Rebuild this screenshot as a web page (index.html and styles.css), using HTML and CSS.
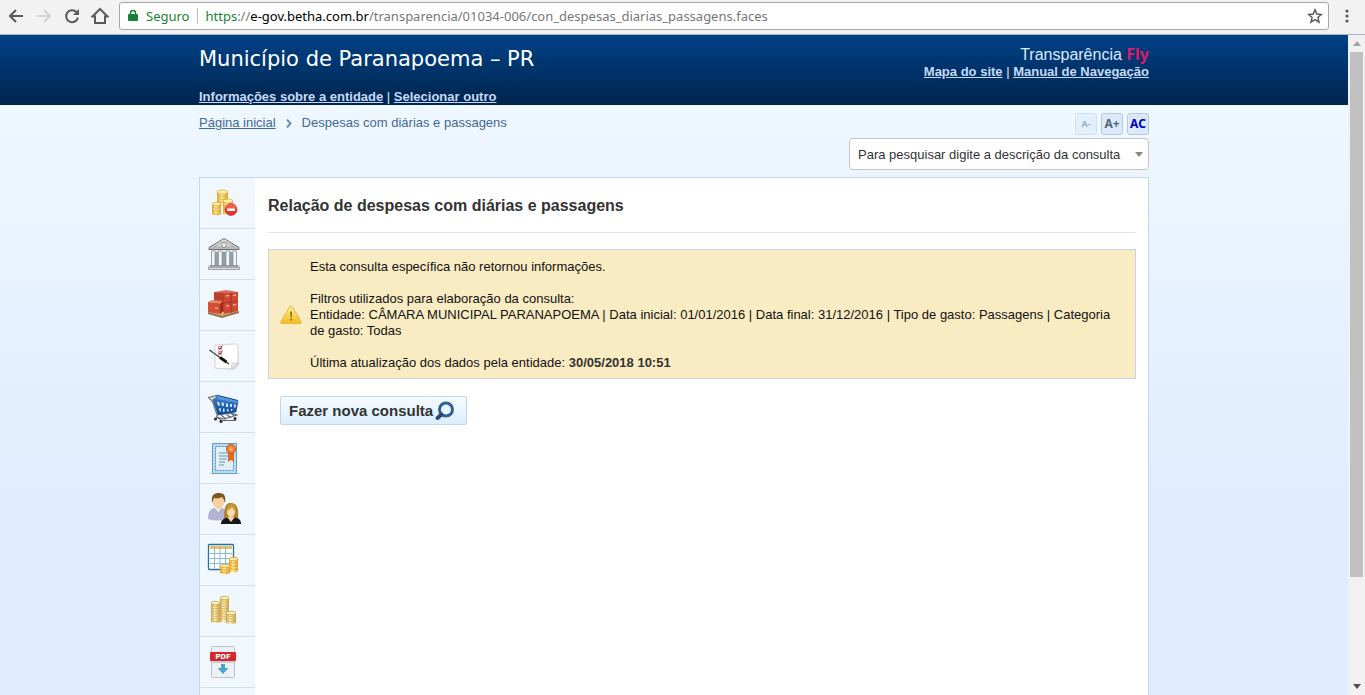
FILE: index.html
```html
<!DOCTYPE html>
<html lang="pt-BR">
<head>
  <meta charset="UTF-8">
  <title>Relação de despesas com diárias e passagens</title>
  <link rel="stylesheet" href="styles.css">
</head>
<body>
  <div class="toolbar">
    <button class="tool" aria-label="Voltar">
      <svg width="18" height="18" viewBox="0 0 18 18"><path d="M16 9H3M9 3L3 9l6 6" fill="none" stroke="#5a5a5a" stroke-width="2"/></svg>
    </button>
    <button class="tool" aria-label="Avançar" disabled>
      <svg width="18" height="18" viewBox="0 0 18 18"><path d="M2 9h13M9 3l6 6-6 6" fill="none" stroke="#d2d2d2" stroke-width="2"/></svg>
    </button>
    <button class="tool" aria-label="Recarregar">
      <svg width="18" height="18" viewBox="0 0 18 18"><path d="M13.500 5A6 6 0 1 0 15 10.500" fill="none" stroke="#5a5a5a" stroke-width="2"/><path d="M16 2v6h-6z" fill="#5a5a5a"/></svg>
    </button>
    <button class="tool" aria-label="Início">
      <svg width="18" height="18" viewBox="0 0 18 18"><path d="M9 2L1.500 9.500H4V16h10V9.500h2.500z" fill="none" stroke="#5a5a5a" stroke-width="2"/></svg>
    </button>
    <div class="address">
      <svg width="10" height="14" viewBox="0 0 10 14"><path d="M2.500 6V4a2.500 2.500 0 0 1 5 0v2" fill="none" stroke="#1a7f37" stroke-width="1.500"/><rect y="5" width="10" height="7" rx="1" fill="#1a7f37"/></svg>
      <span class="secure">Seguro</span>
      <span class="url"><span class="scheme">https</span>://<span class="host">e-gov.betha.com.br</span>/transparencia/01034-006/con_despesas_diarias_passagens.faces</span>
      <button class="star" aria-label="Favoritos">
        <svg width="16" height="16" viewBox="0 0 16 16"><path d="M8 1.800l1.800 4.300 4.600.4-3.500 3 1.100 4.600L8 11.700l-4 2.400 1.100-4.600-3.500-3 4.600-.4z" fill="none" stroke="#5a5a5a" stroke-width="1.500"/></svg>
      </button>
    </div>
    <button class="tool menu" aria-label="Menu">
      <svg width="4" height="16" viewBox="0 0 4 16" fill="#5a5a5a"><circle cx="2" cy="3" r="1.600"/><circle cx="2" cy="8" r="1.600"/><circle cx="2" cy="13" r="1.600"/></svg>
    </button>
  </div>

  <div class="window">
    <div class="page">
      <header>
        <div class="container head">
          <div class="entity">
            <h1>Município de Paranapoema – PR</h1>
            <p><a href="#">Informações sobre a entidade</a> | <a href="#">Selecionar outro</a></p>
          </div>
          <div class="product">
            <p class="brand">Transparência <b>Fly</b></p>
            <p><a href="#">Mapa do site</a> | <a href="#">Manual de Navegação</a></p>
          </div>
        </div>
      </header>

      <div class="container">
        <div class="top">
          <nav class="crumbs">
            <a href="#">Página inicial</a>
            <svg width="6" height="9" viewBox="0 0 6 9"><path d="M1 .5l3.500 4L1 8.500" fill="none" stroke="#6f8fb4" stroke-width="2"/></svg>
            <span>Despesas com diárias e passagens</span>
          </nav>
          <div class="tools">
            <div class="access">
              <button class="smaller" disabled>A-</button>
              <button class="bigger">A+</button>
              <button class="contrast">AC</button>
            </div>
            <div class="search">
              <select aria-label="Pesquisar consulta">
                <option>Para pesquisar digite a descrição da consulta</option>
              </select>
              <svg class="caret" width="8" height="5" viewBox="0 0 8 5"><path d="M0 0h8L4 5z" fill="#888"/></svg>
            </div>
          </div>
        </div>

        <div class="panel">
          <nav class="side">
            <a href="#" aria-label="Despesas">
              <svg width="40" height="40" viewBox="0 0 40 40">
                <defs>
                  <linearGradient id="gold"><stop offset="0" stop-color="#dfa62b"/><stop offset=".4" stop-color="#fff0a0"/><stop offset="1" stop-color="#e0a52c"/></linearGradient>
                  <linearGradient id="pale"><stop offset="0" stop-color="#cdac54"/><stop offset=".4" stop-color="#fff5c4"/><stop offset="1" stop-color="#c8a44a"/></linearGradient>
                  <linearGradient id="stone" x2="0" y2="1"><stop offset="0" stop-color="#ececec"/><stop offset="1" stop-color="#b3b8bc"/></linearGradient>
                  <linearGradient id="basket" x2="0" y2="1"><stop offset="0" stop-color="#3f83d0"/><stop offset="1" stop-color="#07489a"/></linearGradient>
                </defs>
                <path d="M13 9v14h11V9z" fill="url(#gold)"/><ellipse cx="18.500" cy="9" rx="5.500" ry="2" fill="#fff0a8" stroke="#d9a32d" stroke-width=".7"/>
                <path d="M13 12q5.500 3 11 0M13 15q5.500 3 11 0M13 18q5.500 3 11 0" fill="none" stroke="#dba33a" stroke-width=".8"/>
                <path d="M19 18v13h10V18z" fill="url(#gold)"/><ellipse cx="24" cy="18" rx="5" ry="2" fill="#fff0a8" stroke="#d9a32d" stroke-width=".7"/>
                <path d="M8 21v10q4.500 3 9 0V21z" fill="url(#gold)"/><ellipse cx="12.500" cy="21" rx="4.500" ry="1.800" fill="#fff0a8" stroke="#d9a32d" stroke-width=".7"/>
                <path d="M8 24q4.500 3 9 0M8 27q4.500 3 9 0M8 30q4.500 3 9 0" fill="none" stroke="#dba33a" stroke-width=".8"/>
                <circle cx="27" cy="26.500" r="6" fill="#e3352d" stroke="#bf2a24" stroke-width=".6"/><path d="M21.500 25.500a5.500 5 0 0 1 11 0q-5 1-11 0" fill="#f27b70" opacity=".6"/>
                <rect x="23" y="25.500" width="8" height="2.500" rx=".5" fill="#fff"/>
              </svg>
            </a>
            <a href="#" aria-label="Entidade">
              <svg width="40" height="40" viewBox="0 0 40 40">
                <path d="M7 14h26v19H7z" fill="#8fa0ab"/>
                <path d="M20 4.500l15 9v2H5v-2z" fill="url(#stone)" stroke="#6e6e6e" stroke-width="1"/>
                <path d="M20 7l10 6H10z" fill="#d3d6d9" stroke="#999" stroke-width=".6"/><circle cx="20" cy="11" r="2.300" fill="#f3f3f3" stroke="#777" stroke-width=".7"/>
                <path d="M7 16h26v2H7z" fill="#e2e2e2"/>
                <g fill="#f3f3f3" stroke="#858d93" stroke-width=".6"><path d="M7.500 17h3.500v15H7.500zM14.500 17h3.500v15h-3.500zM22 17h3.500v15H22zM29 17h3.500v15H29z"/></g>
                <path d="M6 31.500h28V33H6zM4.500 33h31v2.500h-31z" fill="#d8dadc" stroke="#757575" stroke-width=".6"/>
              </svg>
            </a>
            <a href="#" aria-label="Estoque">
              <svg width="40" height="40" viewBox="0 0 40 40">
                <path d="M4 27l14 5 17-5-9-4z" fill="#c8ad79"/><path d="M4 27v2l14 4 17-5v-2l-17 5z" fill="#947443"/>
                <path d="M10 7l12-2 12 2-12 2z" fill="#dc7058"/>
                <path d="M10 7l10 1v19l-10-2z" fill="#bd3f2b"/><path d="M20 8l14-1v19l-14 3z" fill="#cf4932"/>
                <path d="M20 18l14-2M27 8v20M10 16l10 2" stroke="#9d2e20" stroke-width=".8"/>
                <path d="M4 17l4-2 11 1-3 3z" fill="#e6826a"/><path d="M4 17l12 2v10L4 27z" fill="#d34d37"/><path d="M16 19l3-3v10l-3 3z" fill="#a42c1f"/>
                <path d="M22 11l3-.4M29 10.500l3-.4M22 21l3-.4M29 20l3-.4M11 23l3 .4" stroke="#f6c4b5" stroke-width="1.200"/>
              </svg>
            </a>
            <a href="#" aria-label="Licitações">
              <svg width="40" height="40" viewBox="0 0 40 40">
                <path d="M12 9l22 1 1 19-5 5-19-2z" fill="#d9d9d9"/>
                <path d="M11 9l21-1 2 2v18l-6 5-17-1z" fill="#fff" stroke="#c5c5c5" stroke-width=".7"/><path d="M27 33l1-6h6z" fill="#e9e9e9" stroke="#bbb" stroke-width=".5"/>
                <path d="M14.500 10.500h3v3h-3zM14.500 15.500h3v3h-3z" fill="#fff" stroke="#bb6570" stroke-width=".7"/>
                <path d="M15 11.500l1 1.500 2.500-3.500M15 16.500l1 1.500 2.500-3.500" fill="none" stroke="#b51a2b" stroke-width="1"/>
                <path d="M5.500 14L25 28" stroke="#333" stroke-width="1.300"/><path d="M16 21.500l6.500 4.500" stroke="#111" stroke-width="2.800"/><path d="M7 14.500l6 4.500" stroke="#999" stroke-width=".7"/>
              </svg>
            </a>
            <a href="#" aria-label="Compras">
              <svg width="40" height="40" viewBox="0 0 40 40">
                <path d="M14 8L4.500 10.500l4 4 4.500 13v3l5 3h14M13 28l14-2 6 2-13 4-8-2M17 28l5 4M22 27l5 4M27 26l3 3" fill="none" stroke="#666" stroke-width="1.100"/>
                <path d="M5 11l10-2M7 13l8-2M9 17l3-1" stroke="#999" stroke-width=".8"/>
                <path d="M14 8l20 5-1 3-20-4z" fill="#0d4690"/>
                <path d="M9 13l5-4 20 5-2 11-18 2.500z" fill="url(#basket)" stroke="#07417f" stroke-width=".6"/>
                <path d="M14 9l20 5-1 2-19-4z" fill="#5797da"/>
                <g fill="#dbe8f5"><path d="M13 15h2l1 3.500h-2zM17.500 15.500h2l.5 3.500h-2zM22 16.500h2V20h-2zM26 17h2l-.3 3h-1.700zM30 17.500h2l-.5 3h-1.500zM15 21h1.500l.7 3.500h-1.500zM19 21.500h1.500V25H19zM23 22h1.500v2.500H23zM27 22h1.500l-.3 2H27z"/></g>
                <circle cx="11.500" cy="32" r="1.600" fill="#333"/><circle cx="17" cy="34.500" r="1.600" fill="#333"/><circle cx="31" cy="31.500" r="1.600" fill="#333"/>
              </svg>
            </a>
            <a href="#" aria-label="Contratos">
              <svg width="40" height="40" viewBox="0 0 40 40">
                <path d="M6 35h29v1H6z" fill="#bcc5ce"/>
                <path d="M8.500 5.500h24v30h-24z" fill="#b9dcf5" stroke="#679cc3"/>
                <path d="M11.500 8.500h18v24h-18z" fill="#dff0fb" stroke="#6191b4" stroke-dasharray="2 1"/>
                <path d="M15 15h9M15 18h12M15 21h8M15 24h6M15 27h5" stroke="#6b92b1" stroke-width="1"/>
                <path d="M24 12v12l3-2 3 2V12z" fill="#dd6b26"/><circle cx="27" cy="11" r="4.700" fill="#e97e2d" stroke="#bc5117" stroke-width=".8"/><circle cx="27" cy="11" r="2" fill="#ffae60"/>
              </svg>
            </a>
            <a href="#" aria-label="Pessoal">
              <svg width="40" height="40" viewBox="0 0 40 40">
                <path d="M4 30c0-7 2-10 6-11l4 2 4-2c4 1 4 5 4 11q-9 3-18 0z" fill="#b1b4d2"/><path d="M11 18l3 5 4-5z" fill="#fff"/>
                <ellipse cx="14.500" cy="13" rx="5.500" ry="7" fill="#f5d1a0"/><path d="M8 14c-1-8 2-10 7-10 6 0 7 4 6 10-1-3-2-5-3-6-3 2-7 1-8 1z" fill="#80551f"/>
                <path d="M20 29c0-12 2-15 7-15s8 4 7 15q-8 3-14 0z" fill="#b1832a"/>
                <path d="M17 35c0-4 3-6 8-7h5c5 1 7 3 7 7z" fill="#171717"/><path d="M23 28l4 5 4-5z" fill="#f5cda0"/>
                <ellipse cx="27" cy="22.500" rx="4" ry="5.500" fill="#fbdcb0"/><path d="M22 22c1-6 3-6 6-7 3 0 4 4 4 8-2-1-3-3-4-5-1 2-3 3-6 4z" fill="#c99a39"/>
              </svg>
            </a>
            <a href="#" aria-label="Receitas">
              <svg width="40" height="40" viewBox="0 0 40 40">
                <rect x="4.500" y="4.500" width="25" height="25" rx="1" fill="#fff" stroke="#25729c" stroke-width="1.300"/>
                <path d="M6 6h22v3H6z" fill="#f0bc5c"/><path d="M6 13.500h22M6 18.500h22M6 23.500h22M10.500 6v22M16 6v22M21.500 6v22" stroke="#8ab9dd" stroke-width="1"/>
                <path d="M25 19v12q4.500 3 9 0V19z" fill="url(#gold)"/><ellipse cx="29.500" cy="19" rx="4.500" ry="1.800" fill="#ffe994" stroke="#d89322" stroke-width=".7"/>
                <path d="M25 22q4.500 3 9 0M25 25q4.500 3 9 0M25 28q4.500 3 9 0" fill="none" stroke="#d99a32" stroke-width=".8"/>
                <path d="M16 26v7q5 3 10 0v-7z" fill="url(#gold)"/><ellipse cx="21" cy="26" rx="5" ry="1.800" fill="#ffe994" stroke="#d89322" stroke-width=".7"/>
                <path d="M16 29q5 3 10 0M16 31.500q5 3 10 0" fill="none" stroke="#d99a32" stroke-width=".8"/>
              </svg>
            </a>
            <a href="#" aria-label="Finanças">
              <svg width="40" height="40" viewBox="0 0 40 40">
                <path d="M16 7v24h9V7z" fill="url(#pale)"/><ellipse cx="20.500" cy="7" rx="4.500" ry="1.700" fill="#fff1b9" stroke="#c09b3a" stroke-width=".7"/>
                <path d="M16 9.500q4.500 2 9 0M16 12q4.500 2 9 0M16 14.500q4.500 2 9 0M16 17q4.500 2 9 0M16 19.500q4.500 2 9 0M16 22q4.500 2 9 0M16 24.500q4.500 2 9 0M16 27q4.500 2 9 0" fill="none" stroke="#c39f48" stroke-width=".7"/>
                <path d="M7 12v19q4.500 2 9 0V12z" fill="url(#pale)"/><ellipse cx="11.500" cy="12" rx="4.500" ry="1.700" fill="#fff1b9" stroke="#c09b3a" stroke-width=".7"/>
                <path d="M7 14.500q4.500 2 9 0M7 17q4.500 2 9 0M7 19.500q4.500 2 9 0M7 22q4.500 2 9 0M7 24.500q4.500 2 9 0M7 27q4.500 2 9 0M7 29.500q4.500 2 9 0" fill="none" stroke="#c39f48" stroke-width=".7"/>
                <path d="M22 22v10q5 2 10 0V22z" fill="url(#pale)"/><ellipse cx="27" cy="22" rx="5" ry="1.700" fill="#fff1b9" stroke="#c09b3a" stroke-width=".7"/>
                <path d="M22 24.500q5 2 10 0M22 27q5 2 10 0M22 29.500q5 2 10 0" fill="none" stroke="#c39f48" stroke-width=".7"/>
              </svg>
            </a>
            <a href="#" aria-label="Arquivos PDF">
              <svg width="40" height="40" viewBox="0 0 40 40">
                <rect x="7.500" y="4.500" width="23" height="31" rx="1" fill="#eef1f4" stroke="#bac3cb"/><path d="M6 19h26l-2 2H8z" fill="#c8ced3"/>
                <rect x="6" y="10" width="26" height="9" rx="1" fill="#d8252e"/>
                <text x="19" y="17" class="pdf">PDF</text>
                <path d="M17 22h4v4h3.500L19 32l-5.500-6H17z" fill="#4ba2cf"/>
              </svg>
            </a>
            <a href="#" aria-label="Outros"></a>
          </nav>

          <main>
            <h2>Relação de despesas com diárias e passagens</h2>
            <div class="alert">
              <svg width="22" height="20" viewBox="0 0 22 20">
                <defs><linearGradient id="warn" x2="0" y2="1"><stop offset="0" stop-color="#ffef9c"/><stop offset="1" stop-color="#f6bc16"/></linearGradient></defs>
                <path d="M11 1q1 0 1.500 1l8.500 14.500q1 2-1 2H2q-2 0-1-2L9.500 2Q10 1 11 1z" fill="url(#warn)" stroke="#e3b64e"/>
                <path d="M10.200 6.500h1.800l-.3 6h-1.200zM10.200 13.800H12v1.800h-1.800z" fill="#7c6628"/>
              </svg>
              <div>
                <p>Esta consulta específica não retornou informações.</p>
                <p>Filtros utilizados para elaboração da consulta:<br>
                Entidade: CÂMARA MUNICIPAL PARANAPOEMA | Data inicial: 01/01/2016 | Data final: 31/12/2016 | Tipo de gasto: Passagens | Categoria de gasto: Todas</p>
                <p>Última atualização dos dados pela entidade: <b>30/05/2018 10:51</b></p>
              </div>
            </div>
            <button class="again">Fazer nova consulta
              <svg width="20" height="20" viewBox="0 0 20 20"><circle cx="11" cy="8.500" r="6.500" fill="#eaf6ff" stroke="#345f96" stroke-width="3"/><path d="M6.500 13.500l-4 3.500" stroke="#27496f" stroke-width="3.800" stroke-linecap="round"/></svg>
            </button>
          </main>
        </div>
      </div>
    </div>

    <div class="scroll">
      <svg width="8" height="5" viewBox="0 0 8 5"><path d="M0 5h8L4 0z" fill="#a3a3a3"/></svg>
      <div class="thumb"></div>
      <svg width="8" height="5" viewBox="0 0 8 5"><path d="M0 0h8L4 5z" fill="#505050"/></svg>
    </div>
  </div>
</body>
</html>
```
FILE: styles.css
```css
* { box-sizing: border-box; }

body {
  margin: 0;
  height: 100vh;
  display: flex;
  flex-direction: column;
  overflow: hidden;
  font-family: "Liberation Sans", Arial, sans-serif;
  font-size: 13px;
  line-height: 16px;
  color: #333;
}

h1, h2, p { margin: 0; }
svg { display: block; flex: none; }

button {
  font-family: inherit;
  padding: 0;
  cursor: pointer;
}

/* browser bar */
.toolbar {
  display: flex;
  align-items: center;
  gap: 10px;
  flex: none;
  height: 35px;
  padding: 0 16px 3px 7px;
  background: #f2f2f2;
  border-bottom: 1px solid #a9b4c0;
}

.tool, .star {
  background: none;
  border: none;
}

.address {
  flex: 1;
  display: flex;
  align-items: center;
  height: 28px;
  padding: 0 5px 0 8px;
  background: #fff;
  border: 1px solid #a9a9a9;
  border-radius: 3px;
  font-family: "Noto Sans", sans-serif;
  color: #777;
}

.menu { margin-left: 6px; }

.secure {
  color: #1a7f37;
  margin-left: 8px;
  padding-right: 8px;
  border-right: 1px solid #bbb;
}

.url { flex: 1; margin-left: 7px; }
.scheme { color: #1a7f37; }
.host { color: #000; }

/* page */
.window {
  flex: 1;
  min-height: 0;
  display: flex;
}

.page {
  flex: 1;
  overflow: hidden;
  background: linear-gradient(#eff7ff 70px, #dfedff 460px);
}

.container {
  max-width: 950px;
  margin: 0 auto;
}

header {
  height: 70px;
  background: linear-gradient(#004187, #00254d);
  color: #dbe8ff;
}

header a {
  color: #c6d9f7;
  font-weight: bold;
}

.head {
  height: 100%;
  display: flex;
  justify-content: space-between;
}

.entity {
  display: flex;
  flex-direction: column;
  justify-content: space-between;
  padding-top: 12px;
}

h1 {
  font: 21px/24px "DejaVu Sans", sans-serif;
  color: #fff;
}

.product {
  padding-top: 10px;
  text-align: right;
}

.brand {
  font-size: 16px;
  line-height: 18px;
}

.brand b {
  font-family: "Noto Sans", sans-serif;
  color: #d91b6b;
}

.top {
  display: flex;
  justify-content: space-between;
  padding: 8px 0 7px;
}

.crumbs {
  display: flex;
  align-items: center;
  align-self: flex-start;
  gap: 10px;
  padding-top: 2px;
  color: #426a98;
}

.crumbs a { color: #426a98; }

.tools {
  display: flex;
  flex-direction: column;
  align-items: flex-end;
  gap: 3px;
}

.access { display: flex; gap: 4px; }

.access button {
  width: 22px;
  height: 22px;
  border: 1px solid #b5c9df;
  border-radius: 3px;
  background: #dbe9fa;
  font: bold 12px/20px "Noto Sans", sans-serif;
  color: #50657e;
}

.access .smaller {
  font-size: 9px;
  opacity: .5;
}

.access .contrast { color: #0000c8; }

.search { position: relative; }

.search select {
  appearance: none;
  width: 300px;
  height: 32px;
  padding: 2px 24px 0 8px;
  border: 1px solid #c5c5c5;
  border-radius: 4px;
  background: #fff;
  font: inherit;
  color: #333;
}

.caret {
  position: absolute;
  top: 14px;
  right: 6px;
  pointer-events: none;
}

.panel {
  display: flex;
  background: #fff;
  border: 1px solid #c4d8ee;
}

.side {
  flex: none;
  width: 55px;
  background: #f0f7fe;
}

.side a {
  display: block;
  height: 51px;
  padding: 5px 4px;
  border-bottom: 1px solid #d3e2f2;
}

.pdf {
  font: bold 7px "DejaVu Sans", sans-serif;
  fill: #fff;
  text-anchor: middle;
}

main {
  flex: 1;
  min-width: 0;
  padding: 0 12px 12px 13px;
}

h2 {
  font-size: 16px;
  line-height: 20px;
  padding: 18px 0 16px;
  border-bottom: 1px solid #e3e7ee;
}

.alert {
  display: flex;
  align-items: center;
  gap: 8px;
  margin-top: 16px;
  padding: 9px 12px 7px 11px;
  background: #faecc2;
  border: 1px solid #c8d5e0;
  color: #111;
}

.alert p + p { margin-top: 16px; }
.alert b { color: #333; }

.again {
  display: flex;
  align-items: center;
  gap: 2px;
  height: 29px;
  margin: 17px 12px;
  padding: 0 11px 0 8px;
  border: 1px solid #c2d6ea;
  border-radius: 2px;
  background: linear-gradient(#f6fbff, #dbeefc);
  font-size: 15px;
  font-weight: bold;
  color: #333;
}

/* scrollbar */
.scroll {
  width: 17px;
  display: flex;
  flex-direction: column;
  align-items: center;
  gap: 6px;
  padding: 6px 0;
  background: #f1f1f1;
}

.thumb {
  width: 13px;
  height: 81%;
  margin-bottom: auto;
  background: #c1c1c1;
}
```
